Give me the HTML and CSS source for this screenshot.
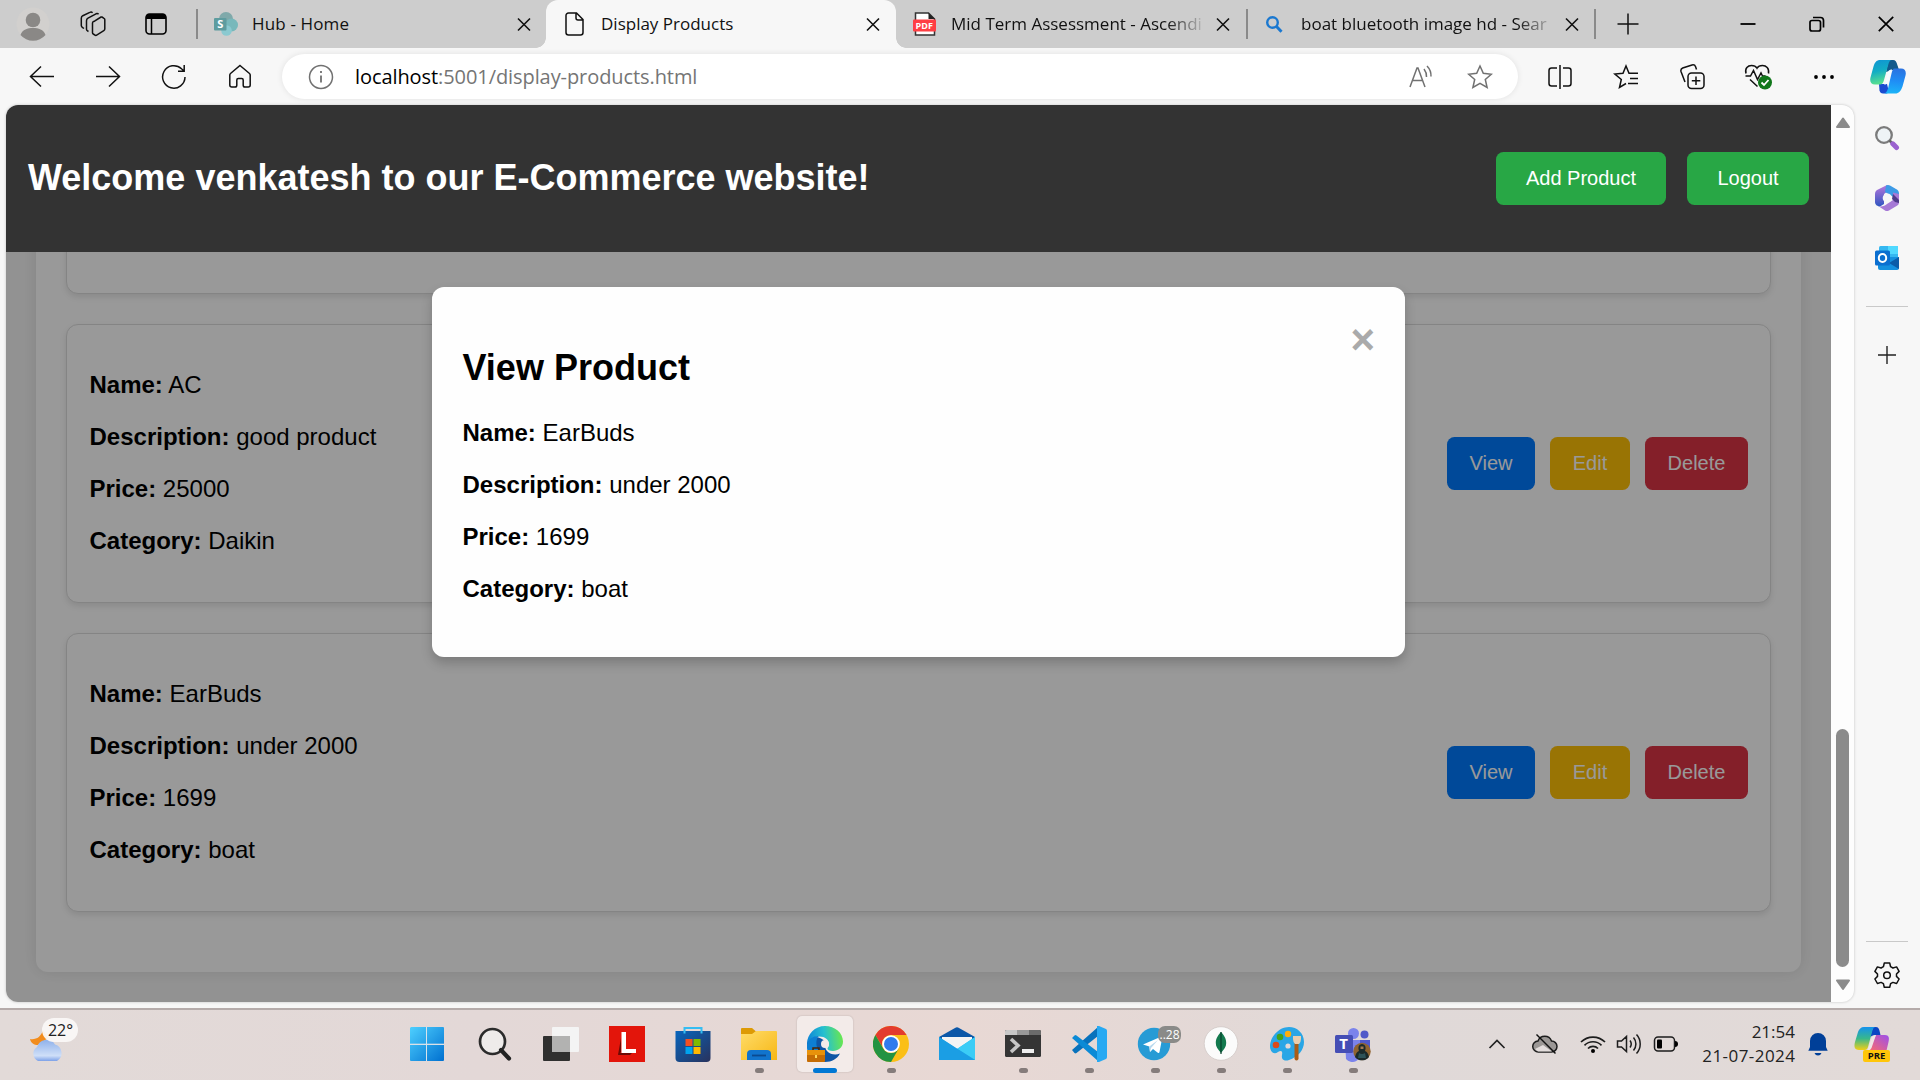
FILE: index.html
```html
<!DOCTYPE html>
<html lang="en">
<head>
<meta charset="utf-8">
<title>Display Products</title>
<link rel="stylesheet" href="styles.css">
</head>
<body>
<div class="desktop">
  <div class="tabbar">
    <div class="cell avatar"><svg width="34" height="34" viewBox="0 0 34 34"><circle cx="17" cy="17" r="16.5" fill="#d2d0ce"/><circle cx="17" cy="13" r="7.3" fill="#8a8886"/><path d="M4.500 28c2-5.500 7-7 12.500-7s10.500 1.500 12.500 7a16.500 16.500 0 0 1-25 0z" fill="#8a8886"/></svg></div>
    <div class="cell spaces"><svg class="line" width="26" height="26" viewBox="0 0 26 26"><path d="M14.500 10.200l6.500-4.200a1.500 1.500 0 0 1 1 0l2 1.300a1.500 1.500 0 0 1 .8 1.300V18a2 2 0 0 1-1 1.700l-7.500 4.600a1.500 1.500 0 0 1-1 0l-2-1.300a1.500 1.500 0 0 1-.8-1.300V12a2 2 0 0 1 1-1.600zM8.500 20.500l-1-.6a2 2 0 0 1-1-1.700V9.800a3 3 0 0 1 1.500-2.600l8-4.400a2.500 2.500 0 0 1 2.600.3M4 17.500l-1.700-1.200a2 2 0 0 1-1-1.700V7.300a3 3 0 0 1 1.500-2.600l7-3.300a2.500 2.500 0 0 1 2.800.3"/></svg></div>
    <div class="cell actions"><svg width="22" height="22" viewBox="0 0 22 22"><rect x="1" y="1" width="20" height="20" rx="3.500" fill="none" stroke="#000" stroke-width="1.600"/><path d="M1 6V4a3 3 0 0 1 3-3h14a3 3 0 0 1 3 3v2z"/><path d="M6.500 5v16" stroke="#000" stroke-width="1.500"/></svg></div>
    <div class="tab first">
      <i class="sep"></i>
      <svg class="fav" width="24" height="24" viewBox="0 0 24 24"><circle cx="12" cy="7" r="7" fill="#7fa9aa"/><circle cx="17.500" cy="13" r="6.500" fill="#78b8bb"/><circle cx="12.500" cy="18.500" r="5.300" fill="#8bc9d0"/><rect x="0" y="6" width="12.500" height="12.500" rx="1" fill="#5e9c9f"/><text x="3.300" y="16" class="glyph g-s">S</text></svg>
      <span class="title">Hub - Home</span>
      <svg class="x" width="24" height="24" viewBox="0 0 24 24"><path d="M6 6.500l12 12M18 6.500l-12 12"/></svg>
    </div>
    <div class="tab active">
      <i class="sep none"></i>
      <svg class="fav line" width="24" height="24" viewBox="0 0 24 24"><path d="M5.500 1H13.500l6.500 6.500V20.500a2.500 2.500 0 0 1-2.500 2.500H5.500A2.500 2.500 0 0 1 3 20.500V3.500A2.500 2.500 0 0 1 5.500 1zM13 1v5a2 2 0 0 0 2 2h5"/></svg>
      <span class="title">Display Products</span>
      <svg class="x" width="24" height="24" viewBox="0 0 24 24"><path d="M6 6.500l12 12M18 6.500l-12 12"/></svg>
    </div>
    <div class="tab">
      <i class="sep none"></i>
      <svg class="fav" width="24" height="24" viewBox="0 0 24 24"><path d="M2.500 1H15.500l6 6v16h-19z" fill="#fff" stroke="#333" stroke-width="1.500"/><path d="M15.500 1v6H22z" fill="#222"/><rect x="0" y="7.500" width="23" height="12" rx="1" fill="#ff3f44"/><text x="2.600" y="16.800" class="glyph g-pdf">PDF</text></svg>
      <span class="title fade">Mid Term Assessment - Ascendi</span>
      <svg class="x" width="24" height="24" viewBox="0 0 24 24"><path d="M6 6.500l12 12M18 6.500l-12 12"/></svg>
    </div>
    <div class="tab last">
      <i class="sep"></i>
      <svg class="fav" width="24" height="24" viewBox="0 0 24 24"><circle cx="9.500" cy="10.500" r="5.300" fill="none" stroke="#1a78d0" stroke-width="2.400"/><path d="M13.500 14.500l5 5.200" stroke="#1a78d0" stroke-width="3"/></svg>
      <span class="title fade">boat bluetooth image hd - Sear</span>
      <svg class="x" width="24" height="24" viewBox="0 0 24 24"><path d="M6 6.500l12 12M18 6.500l-12 12"/></svg>
    </div>
    <i class="sep"></i>
    <div class="cell newtab"><svg width="22" height="22" viewBox="0 0 22 22"><path d="M11 .5v21M.5 11h21" stroke="#111" stroke-width="1.500"/></svg></div>
    <div class="winctl">
      <div class="cell"><svg width="16" height="16" viewBox="0 0 16 16"><path d="M.5 8h15" stroke="#000" stroke-width="1.800"/></svg></div>
      <div class="cell"><svg width="16" height="16" viewBox="0 0 16 16"><g fill="none" stroke="#000" stroke-width="1.700"><rect x="1" y="4.500" width="10.500" height="10.500" rx="2"/><path d="M4 1.500h7.500a3 3 0 0 1 3 3V11.500"/></g></svg></div>
      <div class="cell"><svg width="16" height="16" viewBox="0 0 16 16"><path d="M.8.800l14.400 14.400M15.200.800L.8 15.200" stroke="#000" stroke-width="1.700"/></svg></div>
    </div>
  </div>

  <div class="toolbar">
    <div class="cell"><svg class="line" width="26" height="24" viewBox="0 0 26 24"><path d="M25 11.500H2M12 1.500l-10.500 10 10.500 10"/></svg></div>
    <div class="cell"><svg class="line" width="26" height="24" viewBox="0 0 26 24"><path d="M1 11.500h23M14 1.500l10.500 10-10.500 10"/></svg></div>
    <div class="cell"><svg class="line" width="26" height="26" viewBox="0 0 26 26"><path d="M24 13a11.200 11.200 0 1 1-3.500-8.200L23 7M23.200 1v6.300H17"/></svg></div>
    <div class="cell"><svg class="line" width="24" height="25" viewBox="0 0 24 25"><path d="M12 1.500L21.500 9.500a2 2 0 0 1 .7 1.500V21a2 2 0 0 1-2 2H17a1.800 1.800 0 0 1-1.800-1.800V16a1.500 1.500 0 0 0-1.500-1.500h-3.400A1.500 1.500 0 0 0 8.800 16v5.200A1.800 1.800 0 0 1 7 23H3.800a2 2 0 0 1-2-2V11a2 2 0 0 1 .7-1.500z"/></svg></div>
    <div class="pill">
      <svg class="line grey" width="26" height="26" viewBox="0 0 26 26"><circle cx="13" cy="13" r="11.500"/><path d="M13 11.500v7M13 7v2" stroke-width="1.800"/></svg>
      <span class="url"><b>localhost</b>:5001/display-products.html</span>
      <svg class="line grey read" width="26" height="26" viewBox="0 0 26 26"><path d="M2 23L9 4h1l7 19M4.500 16.500h10M16 5a12 12 0 0 1 2.500 8M19 2a14 14 0 0 1 4 10.500"/></svg>
      <svg class="line grey" width="26" height="26" viewBox="0 0 26 26"><path d="M13 2l3.300 7.300 8 .9-6 5.300 1.800 8L13 19.400 5.900 23.500l1.800-8-6-5.300 8-.9z"/></svg>
    </div>
    <div class="cell"><svg class="line" width="26" height="26" viewBox="0 0 26 26"><path d="M10 4H4.500A2.500 2.500 0 0 0 2 6.500v13A2.500 2.500 0 0 0 4.500 22H10M16 4h5.500A2.500 2.500 0 0 1 24 6.500v13a2.500 2.500 0 0 1-2.500 2.500H16M13 1v24"/></svg></div>
    <div class="cell"><svg class="line" width="26" height="26" viewBox="0 0 26 26"><path d="M13 19.500l-6.500 4 1.800-8-6.500-5.500 8.200-.8L13 2l3 7.200h9M17 14.500h8M15 19.500h10"/></svg></div>
    <div class="cell"><svg class="line" width="26" height="26" viewBox="0 0 26 26"><rect x="9" y="9" width="16" height="15.500" rx="3.500"/><path d="M17 12.500v8.500M12.800 16.700h8.500M6 18L2 7.500A3 3 0 0 1 3.700 4L13 1a3 3 0 0 1 3.600 1.800L17.500 5.500"/></svg></div>
    <div class="cell"><svg class="line" width="30" height="28" viewBox="0 0 30 28"><path d="M3 10.500C1.500 5 5 2.500 8.500 2.500c2.500 0 4.500 1 5.500 2.700 1-1.700 3-2.700 5.500-2.700 3.500 0 7 2.500 6 8M2.500 13h5l3-5.500 4 9 3.500-6.500 1.500 3h3M7 16.500l7.500 7"/><circle cx="22" cy="19.500" r="7" fill="#10771a" stroke="none"/><path d="M18.500 19.500l2.500 2.500 4.500-5" stroke="#fff" stroke-width="1.800"/></svg></div>
    <div class="cell"><svg width="22" height="6" viewBox="0 0 22 6"><circle cx="3" cy="3" r="1.900"/><circle cx="11" cy="3" r="1.900"/><circle cx="19" cy="3" r="1.900"/></svg></div>
    <div class="cell copilot"><svg width="36" height="34" viewBox="0 0 36 34"><defs><linearGradient id="ca" x1="0" y1="0" x2=".2" y2="1"><stop offset="0" stop-color="#0f93d4"/><stop offset=".5" stop-color="#12adc4"/><stop offset="1" stop-color="#58df90"/></linearGradient><linearGradient id="cb" x1=".6" y1="0" x2=".5" y2="1"><stop offset="0" stop-color="#2a72e0"/><stop offset=".5" stop-color="#1f8df5"/><stop offset="1" stop-color="#1cb4f8"/></linearGradient></defs><path d="M9 24h8l2 8-2 1.500h-4c-2 0-3-1-3.500-3z" fill="#1a4bd0"/><path d="M18.500 0H23c2.500 0 3.500 2 4.200 4.500L29 10h-7l-6 2z" fill="#125a8c"/><path d="M24.500 8.500H31c4 0 5.500 3 4.500 7l-3 11c-1.500 4.500-4 7-7 7H13c3 0 4-2 5-5l3.500-15c.7-3 1.500-5 3-5z" fill="url(#cb)"/><path d="M10 0h12c-2 0-3 2-3.700 4.500L14 20c-.8 3-2 4.500-4 4.500H5c-4 0-5.500-3-4.500-7l3-11C4.800 2 7 0 10 0z" fill="url(#ca)"/><path d="M18.500 11c.8-1 2-1.500 3.500-1.500l-4 13c-.6 1.500-2 2-4 2 1-1 1.500-2 2-4z" fill="#f4fbff"/></svg></div>
  </div>

  <div class="middle">
    <div class="viewport">
      <div class="page">
        <header class="site-header">
          <h1>Welcome venkatesh to our E-Commerce website!</h1>
          <div class="header-actions"><button class="btn green add">Add Product</button><button class="btn green logout">Logout</button></div>
        </header>
        <main class="content">
          <section class="container">
            <article class="card"></article>
            <article class="card">
              <div class="info">
                <p><strong>Name:</strong> AC</p>
                <p><strong>Description:</strong> good product</p>
                <p><strong>Price:</strong> 25000</p>
                <p><strong>Category:</strong> Daikin</p>
              </div>
              <div class="row-actions"><button class="btn view">View</button><button class="btn edit">Edit</button><button class="btn delete">Delete</button></div>
            </article>
            <article class="card">
              <div class="info">
                <p><strong>Name:</strong> EarBuds</p>
                <p><strong>Description:</strong> under 2000</p>
                <p><strong>Price:</strong> 1699</p>
                <p><strong>Category:</strong> boat</p>
              </div>
              <div class="row-actions"><button class="btn view">View</button><button class="btn edit">Edit</button><button class="btn delete">Delete</button></div>
            </article>
          </section>
          <div class="overlay">
            <div class="modal">
              <span class="close">&times;</span>
              <h2>View Product</h2>
              <div class="info">
                <p><strong>Name:</strong> EarBuds</p>
                <p><strong>Description:</strong> under 2000</p>
                <p><strong>Price:</strong> 1699</p>
                <p><strong>Category:</strong> boat</p>
              </div>
            </div>
          </div>
        </main>
      </div>
      <div class="scrollbar">
        <svg width="16" height="12" viewBox="0 0 16 12"><path d="M8 1.500L14 10H2z" fill="#8b8b8b" stroke="#8b8b8b" stroke-width="2" stroke-linejoin="round"/></svg>
        <div class="thumb"></div>
        <svg width="16" height="12" viewBox="0 0 16 12"><path d="M8 10L14 1.500H2z" fill="#8b8b8b" stroke="#8b8b8b" stroke-width="2" stroke-linejoin="round"/></svg>
      </div>
    </div>
    <aside class="sidebar">
      <div class="side"><svg width="26" height="26" viewBox="0 0 26 26"><circle cx="10" cy="10" r="7.800" fill="#eef3f6" stroke="#7b7b7b" stroke-width="2.300"/><path d="M15.500 15.500l3 3" stroke="#666" stroke-width="2.600"/><path d="M18.800 18.800l3.700 3.700" stroke="#9a62cf" stroke-width="5" stroke-linecap="round"/></svg></div>
      <div class="side m365"><svg width="26" height="28" viewBox="0 0 26 28"><defs><linearGradient id="m1" x1="0" y1="0" x2="0" y2="1"><stop offset="0" stop-color="#b878dc"/><stop offset="1" stop-color="#2f55c0"/></linearGradient></defs><path d="M13 1L4 5.500A5 5 0 0 0 1 10v8c0 3 3 4.500 5 4.500l4-2.500V10l8-6z" fill="url(#m1)"/><path d="M12 1.500c1-.8 3-.8 4 0l6 3.500a5 5 0 0 1 3 4.500V17l-6.500-4.500L11 8z" fill="#3d9be6"/><path d="M25 10v8a4 4 0 0 1-2.500 4L15 26.500c-1.500.8-3 .8-4 0L5 22.500c4 .5 6-1 8-2.500l6-4V8.500z" fill="#a679d6"/><path d="M19 10l6 6v3l-4-1-3-3z" fill="#503a8a"/><circle cx="13.300" cy="14" r="4.600" fill="#f7f7f7"/></svg></div>
      <div class="side"><svg width="26" height="26" viewBox="0 0 26 26"><rect x="5" y="1" width="19" height="15" rx="1.500" fill="#35b8f1"/><rect x="14" y="1" width="10" height="8" fill="#50d9ff"/><path d="M4 12h21v11a2 2 0 0 1-2 2H6a2 2 0 0 1-2-2z" fill="#1490df"/><path d="M25 12v12L15 18z" fill="#0c5ca8"/><rect x="1" y="5.500" width="15" height="15" rx="1.500" fill="#0b6fd0"/><ellipse cx="8.500" cy="13" rx="3.700" ry="4" fill="none" stroke="#fff" stroke-width="2"/></svg></div>
      <i class="rule top"></i>
      <div class="side plus"><svg width="18" height="18" viewBox="0 0 18 18"><path d="M9 0v18M0 9h18" stroke="#222" stroke-width="1.400"/></svg></div>
      <i class="rule bottom"></i>
      <div class="side gear"><svg class="line" width="26" height="28" viewBox="0 0 26 28"><path stroke-linejoin="round" d="M10.300 2h5.400l.9 3.700 2.300 1.300 3.700-1.100 2.500 4.500-2.600 2.600v2.400l2.600 2.600-2.500 4.500-3.700-1.100-2.300 1.300-.9 3.500h-5.400l-.9-3.500-2.300-1.300-3.700 1.100L.9 18l2.600-2.600V13L.9 10.400l2.500-4.500L7.100 7l2.300-1.300z"/><circle cx="13" cy="14.200" r="3.300"/></svg></div>
    </aside>
  </div>

  <div class="taskbar">
    <div class="weather">
      <svg width="38" height="40" viewBox="0 0 38 40"><defs><linearGradient id="cl" x1="0" y1="0" x2="0" y2="1"><stop offset="0" stop-color="#8fb1ea"/><stop offset=".75" stop-color="#cfdff8"/><stop offset="1" stop-color="#7da1e8"/></linearGradient></defs><path d="M1 16c6 1 11-2 13-9l5 8-10 7c-4 0-7-2-8-6z" fill="#f28c1c"/><path d="M9 38a8 8 0 0 1-1-14A10 10 0 0 1 26 21.500 9 9 0 0 1 28 38z" fill="url(#cl)"/></svg>
      <span class="temp">22°</span>
    </div>
    <div class="apps">
      <div class="app win"><svg width="36" height="36" viewBox="0 0 36 36"><defs><linearGradient id="w" x1="0" y1="0" x2="1" y2="1"><stop offset="0" stop-color="#4ed0ff"/><stop offset="1" stop-color="#0070d0"/></linearGradient></defs><path d="M2 1h15v17H1V2zM18 1h16a1 1 0 0 1 1 1v16H18zM1 19h16v16H2a1 1 0 0 1-1-1zM18 19h17v15a1 1 0 0 1-1 1H18z" fill="url(#w)"/><path d="M17.500 1v34M1 18.200h34" stroke="#d8e4ec"/></svg></div>
      <div class="app"><svg width="36" height="36" viewBox="0 0 36 36"><circle cx="15.500" cy="15.500" r="12.500" fill="#eeebea" stroke="#2b2b2b" stroke-width="2.700"/><path d="M24 24l8 8.500" stroke="#222" stroke-width="4.200" stroke-linecap="round"/></svg></div>
      <div class="app"><svg width="36" height="36" viewBox="0 0 36 36"><rect y="10" width="27" height="25" rx="1" fill="#30302f"/><rect x="9" y="1" width="27" height="25" rx="1" fill="#f4f4f4"/><path d="M9 10h18v16H9z" fill="#b2b2b1"/></svg></div>
      <div class="app"><svg width="36" height="36" viewBox="0 0 36 36"><path d="M0 0h36v36H0z" fill="#e3150b"/><path d="M12 6v20l-3 3L12 12z" fill="#6d0a05"/><path d="M10 27h13l-2 2H9z" fill="#6d0a05"/><path d="M12.500 6h4.500v17h10v4H12.500z" fill="#fff"/></svg></div>
      <div class="app"><svg width="36" height="36" viewBox="0 0 36 36"><defs><linearGradient id="st" x1="0" y1="0" x2="1" y2="1"><stop offset="0" stop-color="#0765bd"/><stop offset="1" stop-color="#29325c"/></linearGradient></defs><path d="M.5 5h35v27a4 4 0 0 1-4 4h-27a4 4 0 0 1-4-4z" fill="url(#st)"/><path d="M9.500 7.500V2h17v5.500" fill="none" stroke="#35bdf2" stroke-width="2"/><path d="M10.500 13h7v7h-7z" fill="#f25022"/><path d="M18.500 13h7v7h-7z" fill="#7fba00"/><path d="M10.500 21h7v7h-7z" fill="#00a4ef"/><path d="M18.500 21h7v7h-7z" fill="#ffb900"/></svg></div>
      <div class="app run"><svg width="36" height="36" viewBox="0 0 36 36"><defs><linearGradient id="fo" x1="0" y1="0" x2="1" y2="1"><stop offset="0" stop-color="#ffdc69"/><stop offset="1" stop-color="#f7b715"/></linearGradient></defs><path d="M0 3a1 1 0 0 1 1-1h10l4 3.500v6H0z" fill="#dd9a05"/><path d="M0 8h11l4-3h20a1 1 0 0 1 1 1v28H0z" fill="url(#fo)"/><path d="M6 34v-6a4 4 0 0 1 4-4h16a4 4 0 0 1 4 4v6z" fill="#1174cd"/><path d="M11 29.500h14" stroke="#0b4a8f" stroke-width="1.800"/></svg></div>
      <div class="app run current"><svg width="36" height="36" viewBox="0 0 36 36"><defs><linearGradient id="e1" x1="0" y1=".6" x2="1" y2=".5"><stop offset="0" stop-color="#0c84d8"/><stop offset=".5" stop-color="#26c0cf"/><stop offset="1" stop-color="#6ae84c"/></linearGradient></defs><path d="M0 17A18 18 0 0 0 18 36c7 0 12-3 15-8.500-4 2-10 1-12.500-2-3.500-4-2.500-8-2-9.500C13 9 3 10 0 17z" fill="#0e56a5"/><path d="M0 18C0 8 8 0 18 0s18 7 18 15.500c0 6-5 9.500-10 9.500-3.500 0-5.500-1-5.500-2.500 0-1 1.500-1.500 1.500-4.500 0-4-4-7.500-9.500-7.500C6 10.500 1 14 0 18z" fill="url(#e1)"/><path d="M0 18c1-5 6-8 11.500-8-3 4-3 11 1 16H1A18 18 0 0 1 0 18z" fill="#0d7fd2"/><circle cx="18" cy="18" r="4" fill="#f3ebe9"/><rect x="0" y="24" width="18" height="12" rx="1" fill="#c66d04"/><path d="M0 24h18v5H0z" fill="#e8920b"/><path d="M6 24v-2h6v2" fill="none" stroke="#4c2500" stroke-width="1.500"/><path d="M8 29h2v3H8z" fill="#ffd95e"/></svg></div>
      <div class="app run"><svg width="36" height="36" viewBox="0 0 36 36"><circle cx="18" cy="18" r="18" fill="#fbbf16"/><path d="M2.400 9A18 18 0 0 1 33.600 9H18a9 9 0 0 0-8.500 12z" fill="#e33b2e"/><path d="M2.400 9A18 18 0 0 0 18 36l7.800-13.500A9 9 0 0 1 10.200 22.500z" fill="#229342"/><circle cx="18" cy="18" r="8.800" fill="#fff"/><circle cx="18" cy="18" r="7" fill="#2f7bed"/></svg></div>
      <div class="app"><svg width="36" height="36" viewBox="0 0 36 36"><path d="M0 11L16 2q2-1.500 4 0l16 9v12H0z" fill="#0b57a8"/><path d="M3 11h30v12H3z" fill="#f4f4f4"/><path d="M0 11l18 12L36 11v23H0z" fill="#25b5ec"/><path d="M18 23l18-12v23z" fill="#3bccf6"/><path d="M0 11l36 23H0z" fill="#1b9ee4"/></svg></div>
      <div class="app run"><svg width="36" height="36" viewBox="0 0 36 36"><rect y="4" width="36" height="27" rx="1.500" fill="#353535"/><path d="M0 9V5.500A1.500 1.500 0 0 1 1.500 4H12v5z" fill="#c8c8c8"/><path d="M12 4h12v5H12z" fill="#999"/><path d="M24 4h10.500A1.500 1.500 0 0 1 36 5.500V9H24z" fill="#6b6b6b"/><path d="M6 13l7 6.500L6 26" fill="none" stroke="#c5c5c5" stroke-width="3.600"/><path d="M17 23h12v4H17z" fill="#eee"/></svg></div>
      <div class="app run"><svg width="36" height="36" viewBox="0 0 36 36"><path d="M1 24l2.500 3q1 .8 2 0L27 10V1z" fill="#0872bc"/><path d="M1 12l2.500-2.500q1-.8 2 0L27 26v9z" fill="#0b8ad6"/><path d="M26 0h2l7 3q1 .6 1 2v26q0 1.500-1 2l-7 3h-2z" fill="#27a9f2"/></svg></div>
      <div class="app run telegram"><svg width="36" height="36" viewBox="0 0 36 36"><circle cx="17" cy="18" r="16.200" fill="#279bd5"/><path d="M6 18.500l18.500-8q1-.3.800 1L22.500 26q-.4 1.500-1.700.7L16 23l-3 3-.7-5.500z" fill="#fff"/><path d="M12.300 20.500L21 14l-7 8-1 4z" fill="#b8d9ee"/></svg><span class="badge">..28</span></div>
      <div class="app run"><svg width="36" height="36" viewBox="0 0 36 36"><circle cx="18" cy="17.500" r="16.800" fill="#fbfbfb" stroke="#d0c8c5" stroke-width=".8"/><path d="M18 6c4 4.500 5.200 7 5.200 11s-2 6-5.200 10c-3.200-4-5.200-6-5.200-10S14 10.500 18 6z" fill="#13794e"/><path d="M18 6v22" stroke="#083f2b" stroke-width="1.200"/></svg></div>
      <div class="app run"><svg width="36" height="36" viewBox="0 0 36 36"><path d="M20 1C9 1 1 12 1 20c0 6 4 9 8 6 3-2 5-1 4 3-1 5 3 6.500 7 5 9-3 15-10 15-18C35 7 28 1 20 1z" fill="#29a6e6"/><circle cx="19" cy="20" r="2.600" fill="#e4dad8"/><circle cx="7" cy="19" r="3.300" fill="#dc4a19"/><circle cx="11" cy="11" r="3.300" fill="#44a31b"/><circle cx="19" cy="8" r="3.200" fill="#ffae0d"/><path d="M25.500 17h4v16q-2 3-4 0z" fill="#aa5d16"/><path d="M24 10h8v3q0 3-2 5h-4q-2-2-2-5z" fill="#e8cdad"/></svg></div>
      <div class="app run"><svg width="36" height="36" viewBox="0 0 36 36"><circle cx="18.500" cy="7.500" r="5.500" fill="#7b83eb"/><circle cx="29.500" cy="8.500" r="4" fill="#5059c9"/><path d="M24 14h11v12q-2 6-11 4z" fill="#5059c9"/><path d="M10 14h15v12a8 8 0 0 1-14 7z" fill="#7b83eb"/><rect x="0" y="9" width="18" height="18" rx="1.500" fill="#454eb5"/><text x="4.300" y="23" class="glyph g-t">T</text><circle cx="27" cy="25.500" r="8.700" fill="#8f6330"/><path d="M20 31a9 9 0 0 0 14 0q-1-5-4-6 2-6-3-7-5 1-3 7-3 1-4 6z" fill="#1b2b2b"/><path d="M25.500 20.500h3v2.500h-3z" fill="#a7784f"/><path d="M24 27q3 2 6 0l1 5h-8z" fill="#2d5358"/></svg></div>
    </div>
    <div class="tray">
      <svg class="chev" width="18" height="12" viewBox="0 0 18 12"><path d="M1.500 10L9 2.500l7.500 7.500" fill="none" stroke="#222" stroke-width="1.700"/></svg>
      <svg class="cloud" width="26" height="22" viewBox="0 0 26 22"><path d="M6.500 19a5.500 5.500 0 0 1-.5-11A7.200 7.200 0 0 1 19.500 8a5.500 5.500 0 0 1 0 11z" fill="#9b9795" stroke="#1d1d1d" stroke-width="1.500"/><path d="M3 16l8-4 9 6.500H6z" fill="#e3dddc"/><path d="M4.500 1.500l19 19" stroke="#111" stroke-width="1.500"/></svg>
      <svg class="wifi" width="26" height="20" viewBox="0 0 26 20"><g fill="none" stroke="#1d1d1d" stroke-width="1.700"><path d="M1 8a17 17 0 0 1 24 0M4.500 11.300a12 12 0 0 1 17 0M8 14.500a7 7 0 0 1 10 0"/></g><circle cx="13" cy="17" r="2"/></svg>
      <svg class="vol" width="26" height="22" viewBox="0 0 26 22"><g fill="none" stroke="#1d1d1d" stroke-width="1.500"><path d="M1.500 8v6h4l5 4.500v-15L5.500 8zM14 7.500a6 6 0 0 1 0 7M17.500 4.500a10 10 0 0 1 0 13M20.500 1.500a14 14 0 0 1 0 19"/></g></svg>
      <svg class="batt" width="26" height="18" viewBox="0 0 26 18"><rect x="1.500" y="2" width="20" height="14" rx="3.500" fill="none" stroke="#1d1d1d" stroke-width="1.500"/><rect x="4" y="4.500" width="5" height="9" rx="1"/><path d="M22 6q3 0 3 3t-3 3z"/></svg>
      <div class="clock"><span>21:54</span><span class="date">21-07-2024</span></div>
      <svg class="bell" width="20" height="24" viewBox="0 0 20 24"><path d="M10 1a8 8 0 0 1 8 8v6l1.700 3.700H.3L2 15V9a8 8 0 0 1 8-8zM6.500 21h7q-1 2.500-3.500 2.500T6.500 21z" fill="#003f98"/></svg>
      <div class="pre">
        <svg width="36" height="25" viewBox="0 0 36 25"><defs><linearGradient id="p1" x1="0" y1="0" x2="0" y2="1"><stop offset="0" stop-color="#1592ed"/><stop offset=".5" stop-color="#38b88c"/><stop offset="1" stop-color="#f2cf16"/></linearGradient><linearGradient id="p2" x1="1" y1="0" x2="0" y2="1"><stop offset="0" stop-color="#9b50ec"/><stop offset="1" stop-color="#fd6b6b"/></linearGradient></defs><path d="M19 1h3c3 0 3.500 3 4.500 8H21q-2 0-5 2z" fill="#0b45c3"/><path d="M22 9h9c4 0 4.500 3 3.500 7l-2 8.500H14z" fill="url(#p2)"/><path d="M10 1h12c-2 0-3 1.500-3.700 4L14 21c-.6 2-1.500 3-3 3H5c-5 0-5-4-4-8l3-10c1-3 3-5 6-5z" fill="url(#p1)"/><path d="M18 11q1.500-2 4-2l-4.500 13q-.6 2-4 2.500z" fill="#f0e6e6"/></svg>
        <span>PRE</span>
      </div>
    </div>
  </div>
</div>
</body>
</html>
```
FILE: styles.css
```css
* { box-sizing: border-box; }
body { margin: 0; font-family: "Liberation Sans", Arial, sans-serif; }
.desktop { width: 1920px; height: 1080px; overflow: hidden; display: flex; flex-direction: column; background: #f7f7f7; }
svg { display: block; flex: none; }
.line { fill: none; stroke: #111; stroke-width: 1.5; }
.line.grey { stroke: #717171; }
.glyph { fill: #fff; font-family: "Open Sans", sans-serif; font-weight: 700; }
.g-s { font-size: 11px; }
.g-pdf { font-size: 9px; }
.g-t { font-size: 15px; }
.cell { display: flex; align-items: center; justify-content: center; flex: none; height: 100%; }

/* tab strip */
.tabbar { height: 48px; background: #cdcdcd; display: flex; align-items: center; font-family: "Open Sans", "Noto Sans", sans-serif; font-size: 17px; }
.avatar { width: 66px; }
.spaces { width: 54px; }
.actions { width: 76px; padding-right: 4px; }
.sep { width: 2px; height: 30px; background: #8a8a8a; flex: none; }
.sep.none { background: none; }
.tab { width: 350px; height: 48px; display: flex; align-items: center; padding-right: 11px; flex: none; position: relative; }
.tab.first { padding-right: 10px; letter-spacing: .15px; }
.tab.last { width: 348px; padding-right: 10px; }
.tab.active { background: #f7f7f7; border-radius: 12px 12px 0 0; }
.tab.active::before, .tab.active::after { content: ""; position: absolute; bottom: 0; width: 10px; height: 10px; }
.tab.active::before { left: -10px; background: radial-gradient(circle at 0 0, transparent 9.500px, #f7f7f7 10px); }
.tab.active::after { right: -10px; background: radial-gradient(circle at 100% 0, transparent 9.500px, #f7f7f7 10px); }
.fav { margin: 0 14px 0 15px; }
.tab.first .fav { margin: 0 14px 0 16px; }
.title { flex: 1; min-width: 0; white-space: nowrap; color: #111; line-height: 24px; }
.title.fade { -webkit-mask-image: linear-gradient(90deg, #000 215px, transparent 256px); mask-image: linear-gradient(90deg, #000 215px, transparent 256px); }
.x { stroke: #111; stroke-width: 1.6; }
.newtab { width: 64px; }
.winctl { margin-left: auto; display: flex; height: 100%; }
.winctl .cell { width: 69px; }

/* address row */
.toolbar { height: 57px; display: flex; align-items: center; padding-left: 9px; }
.toolbar .cell { width: 66px; }
.toolbar .copilot { width: 62px; }
.pill { width: 1236px; height: 45px; margin: 0 9px; border-radius: 23px; background: #fff; box-shadow: 0 0 6px rgba(0,0,0,.09); display: flex; align-items: center; padding: 0 25px 0 26px; }
.url { flex: 1; margin-left: 21px; font: 20px/28px "Open Sans", "Noto Sans", sans-serif; letter-spacing: -.08px; color: #757575; white-space: nowrap; }
.url b { font-weight: 400; color: #000; }
.read { margin-right: 33px; }

/* browser body */
.middle { height: 903px; display: flex; padding-left: 6px; }
.viewport { width: 1848px; height: 897px; display: flex; border-radius: 12px; overflow: hidden; background: #fdfdfd; box-shadow: 0 0 3px rgba(0,0,0,.22); }
.page { width: 1825px; display: flex; flex-direction: column; }
.site-header { height: 147px; background: #333; color: #fff; display: flex; align-items: center; justify-content: space-between; padding: 0 22px; flex: none; }
h1, h2 { margin: 0; font-size: 36px; line-height: 42px; }
h1 { padding-bottom: 2px; }
.header-actions { display: flex; gap: 21px; }
.btn { height: 53px; border: 0; border-radius: 7.5px; color: #fff; font: 20px "Liberation Sans", Arial, sans-serif; padding: 0; }
.btn.green { background: #28a745; }
.btn.add { width: 170px; }
.btn.logout { width: 122px; }
.btn.view { background: #007bff; width: 88px; }
.btn.edit { background: #ffc107; width: 80px; }
.btn.delete { background: #dc3545; width: 103px; }
.content { height: 750px; background: #f4f4f4; display: flex; flex-direction: column; justify-content: flex-end; overflow: hidden; position: relative; }
.container { flex: none; margin: 0 30px 30px; padding: 30px; background: #fff; border-radius: 12px; box-shadow: 0 0 15px rgba(0,0,0,.1); }
.card { height: 279px; margin-bottom: 30px; border: 1px solid #ddd; border-radius: 12px; box-shadow: 0 3px 6px rgba(0,0,0,.1); padding: 0 22px; display: flex; align-items: center; justify-content: space-between; background: #fff; }
.card .info { padding: 0 0 2px .5px; }
.info { display: flex; flex-direction: column; gap: 24px; font-size: 24px; line-height: 28px; color: #000; }
.info p { margin: 0; }
.row-actions { display: flex; gap: 15px; }
.overlay { position: absolute; inset: 0; background: rgba(0,0,0,.4); display: flex; justify-content: center; align-items: flex-start; padding-top: 35px; }
.modal { position: relative; width: 973px; height: 370px; background: #fefefe; border-radius: 12px; padding: 60px 30px 0 30.5px; box-shadow: 0 6px 12px rgba(0,0,0,.2); }
.modal h2 { margin-bottom: 30px; }
.close { position: absolute; top: 29px; right: 30px; font-size: 42px; line-height: 48px; font-weight: 700; color: #aaa; }
.scrollbar { width: 23px; display: flex; flex-direction: column; align-items: center; padding: 12px 0 11px; }
.thumb { width: 13px; height: 238px; margin: auto 0 12px; border-radius: 7px; background: #8b8b8b; }
.sidebar { width: 65px; display: flex; flex-direction: column; align-items: center; }
.side { height: 61px; display: flex; align-items: center; flex: none; }
.side:first-child { padding-top: 4px; }
.side.m365 { padding-top: 3px; }
.rule { width: 42px; height: 1px; background: #c9c9c9; }
.rule.top { margin-top: 18px; }
.side.plus { height: 96px; }
.rule.bottom { margin-top: auto; }
.side.gear { height: 66px; }

/* taskbar */
.taskbar { height: 72px; border-top: 2px solid #b5abaa; background: linear-gradient(90deg, #e2dad8, #e3d8d7 25%, #e8d8d4 50%, #e0d9d8 72%, #e2dad8); display: flex; align-items: center; }
.weather { width: 396px; height: 70px; position: relative; padding: 13px 0 0 29px; }
.temp { position: absolute; left: 42px; top: 8px; width: 36px; height: 24px; border-radius: 12px; background: rgba(250,248,247,.94); font: 16px/24px "Open Sans", sans-serif; text-align: center; color: #222; padding-left: 1px; }
.apps { display: flex; height: 70px; }
.app { width: 66px; display: flex; align-items: center; justify-content: center; position: relative; padding-bottom: 2px; }
.app.win { padding-right: 4px; }
.app.run::after { content: ""; position: absolute; left: 29px; bottom: 7px; width: 9px; height: 5px; border-radius: 3px; background: #857c7b; }
.app.current::before { content: ""; position: absolute; left: 5px; top: 6px; width: 56px; height: 56px; border-radius: 5px; background: #f3ebe9; box-shadow: 0 0 2px rgba(0,0,0,.2); }
.app.current svg { position: relative; }
.app.run.current::after { left: 21px; width: 24px; background: #0078d4; }
.badge { position: absolute; left: 36px; top: 16px; width: 23px; height: 17px; border-radius: 7px; background: #8a8a88; color: #fff; font: 12px/17px "Open Sans", sans-serif; text-align: center; }
.tray { margin-left: auto; display: flex; align-items: center; height: 70px; padding: 0 30px 2px 0; }
.cloud { margin-left: 26px; }
.wifi { margin-left: 22px; }
.vol { margin-left: 10px; }
.batt { margin-left: 11px; }
.clock { width: 116px; display: flex; flex-direction: column; align-items: flex-end; font: 17px/24px "Open Sans", sans-serif; color: #222; }
.date { letter-spacing: .45px; margin-right: -.45px; }
.bell { margin-left: 13px; }
.pre { margin-left: 26px; width: 36px; height: 36px; position: relative; }
.pre span { position: absolute; left: 9px; bottom: 0; width: 27px; height: 12px; border-radius: 2px; background: #ffc60a; font: 700 9.500px/12px "Open Sans", sans-serif; text-align: center; color: #111; }
```
